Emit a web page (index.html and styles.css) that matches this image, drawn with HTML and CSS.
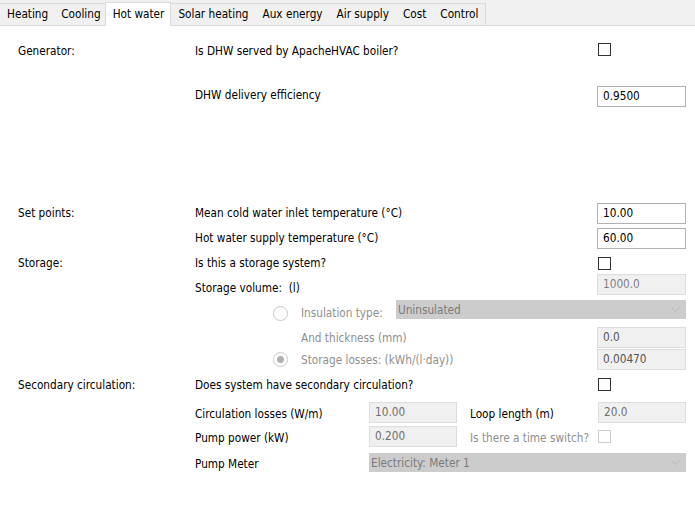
FILE: index.html
```html
<!DOCTYPE html>
<html>
<head>
<meta charset="utf-8">
<link rel="stylesheet" href="styles.css">
</head>
<body>
<div class="tabbar">
  <div class="tabs">
    <div class="tab">Heating</div>
    <div class="tab">Cooling</div>
    <div class="tab active">Hot water</div>
    <div class="tab">Solar heating</div>
    <div class="tab">Aux energy</div>
    <div class="tab">Air supply</div>
    <div class="tab">Cost</div>
    <div class="tab">Control</div>
  </div>
</div>
<div class="page">
  <div class="row r1">
    <div class="c0">Generator:</div>
    <div class="lbl grow">Is DHW served by ApacheHVAC boiler?</div>
    <div class="ctl"><span class="cb"></span></div>
  </div>
  <div class="row r2">
    <div class="c0"></div>
    <div class="lbl grow top">DHW delivery efficiency</div>
    <div class="inp">0.9500</div>
  </div>

  <div class="row r3">
    <div class="c0">Set points:</div>
    <div class="lbl grow">Mean cold water inlet temperature (°C)</div>
    <div class="inp">10.00</div>
  </div>
  <div class="row r4">
    <div class="c0"></div>
    <div class="lbl grow">Hot water supply temperature (°C)</div>
    <div class="inp">60.00</div>
  </div>

  <div class="row r5">
    <div class="c0">Storage:</div>
    <div class="lbl grow">Is this a storage system?</div>
    <div class="ctl"><span class="cb"></span></div>
  </div>
  <div class="row r6">
    <div class="c0"></div>
    <div class="lbl grow">Storage volume:&nbsp; (l)</div>
    <div class="inp dis">1000.0</div>
  </div>
  <div class="row r7">
    <div class="c0"></div>
    <div class="indent"><span class="radio"></span></div>
    <div class="lbl dim ins">Insulation type:</div>
    <div class="combo grow"><span>Uninsulated</span><svg class="chev" width="9" height="5" viewBox="0 0 9 5"><polyline points="0.5,0.5 4.5,4.5 8.5,0.5" fill="none" stroke="#b3b3b3" stroke-width="1"/></svg></div>
  </div>
  <div class="row r8">
    <div class="c0"></div>
    <div class="indent"></div>
    <div class="lbl dim grow">And thickness (mm)</div>
    <div class="inp dis dark">0.0</div>
  </div>
  <div class="row r9">
    <div class="c0"></div>
    <div class="indent"><span class="radio on"></span></div>
    <div class="lbl dim grow">Storage losses: (kWh/(l·day))</div>
    <div class="inp dis dark">0.00470</div>
  </div>

  <div class="row r10">
    <div class="c0">Secondary circulation:</div>
    <div class="lbl grow">Does system have secondary circulation?</div>
    <div class="ctl"><span class="cb"></span></div>
  </div>
  <div class="row r11">
    <div class="c0"></div>
    <div class="lbl c1">Circulation losses (W/m)</div>
    <div class="inp dis mid">10.00</div>
    <div class="lbl grow c3">Loop length (m)</div>
    <div class="inp dis mid">20.0</div>
  </div>
  <div class="row r12">
    <div class="c0"></div>
    <div class="lbl c1">Pump power (kW)</div>
    <div class="inp dis mid">0.200</div>
    <div class="lbl grow c3 dim">Is there a time switch?</div>
    <div class="ctl"><span class="cb dis"></span></div>
  </div>
  <div class="row r13">
    <div class="c0"></div>
    <div class="lbl c1">Pump Meter</div>
    <div class="combo grow"><span>Electricity: Meter 1</span><svg class="chev" width="9" height="5" viewBox="0 0 9 5"><polyline points="0.5,0.5 4.5,4.5 8.5,0.5" fill="none" stroke="#b3b3b3" stroke-width="1"/></svg></div>
  </div>
</div>
</body>
</html>
```
FILE: styles.css
```css
* { box-sizing: border-box; }
html, body { margin: 0; padding: 0; }
body {
  width: 695px;
  height: 517px;
  overflow: hidden;
  background: #ffffff;
  color: #000000;
  font-family: "DejaVu Sans Condensed", "DejaVu Sans", sans-serif;
  font-stretch: semi-condensed;
  font-size: 11.7px;
  line-height: 14px;
}

/* tab bar */
.tabbar {
  height: 26px;
  background: #f0f0f0;
  border-bottom: 1px solid #dadada;
  display: flex;
  align-items: flex-end;
}
.tabs {
  display: flex;
  align-items: flex-end;
  height: 23px;
  border-top: 1px solid #dadada;
  border-right: 1px solid #dadada;
  margin-bottom: -1px;
}
.tab {
  height: 22px;
  padding: 0 7px;
  line-height: 20px;
  color: #000;
  white-space: nowrap;
}
.tab:first-child { padding-right: 6px; }
.tab.active {
  position: relative;
  height: 24px;
  margin: 0 0 0 -3px;
  padding: 1px 6px 0 7px;
  line-height: 20px;
  background: #ffffff;
  border: 1px solid #dadada;
  border-bottom: none;
}

/* form */
.page {
  padding: 0 9px 0 18px;
}
.row {
  display: flex;
  align-items: center;
}
.c0 {
  width: 177px;
  flex: none;
  white-space: nowrap;
}
.lbl { white-space: nowrap; }
.grow { flex: 1 1 auto; }
.top { align-self: flex-start; margin-top: 2px; }
.dim { color: #8f8f8f; }
.ctl {
  width: 89px;
  flex: none;
  display: flex;
  align-items: center;
}
.cb {
  display: block;
  width: 13px;
  height: 13px;
  margin-left: 1px;
  border: 1px solid #333333;
  background: #ffffff;
}
.cb.dis { border-color: #cdcdcd; }

.inp {
  flex: none;
  width: 89px;
  height: 21px;
  padding: 0 5px;
  line-height: 19px;
  border: 1px solid #b1b1b1;
  background: #ffffff;
  color: #000;
  white-space: nowrap;
}
.inp.dis {
  background: #f0f0f0;
  border-color: #dcdcdc;
  color: #7f7f7f;
}
.inp.dark { color: #555555; }
.inp.mid { color: #6e6e6e; width: 88px; }

.combo {
  height: 19px;
  background: #cccccc;
  color: #7a7a7a;
  display: flex;
  align-items: center;
  justify-content: space-between;
  padding: 0 6px 0 2px;
  white-space: nowrap;
}
.chev { display: block; }

.indent {
  width: 106px;
  flex: none;
  display: flex;
  align-items: center;
  padding-left: 78px;
}
.radio {
  display: block;
  width: 15px;
  height: 15px;
  border-radius: 50%;
  border: 1px solid #c8c8c8;
  background: #ffffff;
  position: relative;
}
.radio.on::after {
  content: "";
  position: absolute;
  left: 3px;
  top: 3px;
  width: 7px;
  height: 7px;
  border-radius: 50%;
  background: #b0b0b0;
}
.ins { width: 95px; flex: none; }

.c1 { width: 174px; flex: none; }
.c3 { padding-left: 13px; }

/* vertical rhythm */
.r1 { margin-top: 15px; height: 16px; }
.r1 .c0, .r1 .lbl { padding-top: 4px; }
.r2 { margin-top: 29px; height: 21px; }
.r3 { margin-top: 96px; height: 21px; }
.r3 .c0, .r3 .lbl, .r4 .lbl { padding-bottom: 2px; }
.r4 { margin-top: 4px; height: 21px; }
.r5 { margin-top: 7px; height: 14px; }
.r6 { margin-top: 4px; height: 21px; }
.r6 .lbl { padding-top: 6px; }
.r7 { margin-top: 5px; height: 19px; }
.r7 .lbl, .r7 .indent { padding-top: 7px; }
.r8 { margin-top: 8px; height: 21px; }
.r9 { margin-top: 1px; height: 21px; }
.r10 { margin-top: 7px; height: 14px; }
.r10 .c0, .r10 .lbl, .r11 .lbl, .r12 .lbl, .r13 .lbl { padding-top: 2px; }
.r11 { margin-top: 11px; height: 21px; }
.r12 { margin-top: 3px; height: 21px; }
.r13 { margin-top: 6px; height: 19px; }
```
